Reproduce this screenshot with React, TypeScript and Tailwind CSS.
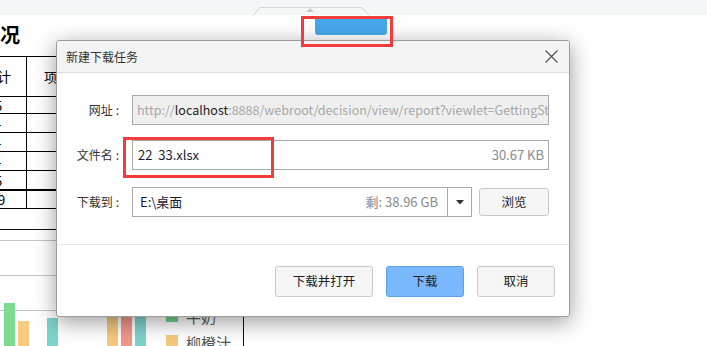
const cjk = { fontFamily: '"Noto Sans CJK SC", "Noto Sans", sans-serif' };

function TableRow({ v, h, shift, thick }: { v: string; h: string; shift: string; thick?: boolean }) {
  return (
    <div className={`flex ${h} ${thick ? "border-b-2" : "border-b"} border-black`}>
      <div className="w-[27px] border-r border-black overflow-hidden flex items-center text-[13px] leading-none">
        <span className={`inline-block ${shift}`}>{v}</span>
      </div>
      <div className="w-[60px]" />
    </div>
  );
}

function Chart() {
  return (
    <svg width="260" height="137" className="block">
      <line x1="0" y1="20.5" x2="56" y2="20.5" stroke="#111" />
      <line x1="0" y1="31.5" x2="250" y2="31.5" stroke="#c4c4c4" />
      <line x1="0" y1="66.5" x2="250" y2="66.5" stroke="#c4c4c4" />
      <line x1="0" y1="101.5" x2="250" y2="101.5" stroke="#c4c4c4" />
      <rect x="4" y="94" width="11" height="43" fill="#7ddb8f" />
      <rect x="18" y="112" width="11" height="25" fill="#f7cb80" />
      <rect x="47" y="109" width="11" height="28" fill="#7dd4cc" />
      <rect x="107" y="95" width="11" height="42" fill="#f5c97e" />
      <rect x="121" y="95" width="11" height="42" fill="#f4968a" />
      <rect x="135" y="95" width="11" height="42" fill="#7dd3cb" />
      <rect x="166" y="101" width="12" height="12" fill="#6fcf86" />
      <rect x="166" y="126" width="12" height="12" fill="#f7c97e" />
      <text x="186" y="114" fontSize="15" fill="#555" style={cjk}>牛奶</text>
      <text x="186" y="140" fontSize="15" fill="#555" style={cjk}>柳橙汁</text>
      <line x1="243.5" y1="100" x2="243.5" y2="137" stroke="#111" />
    </svg>
  );
}

function Btn({ w, primary, children }: { w: string; primary?: boolean; children: string }) {
  return (
    <button
      className={`${w} h-[31px] rounded-[3px] border text-[12.5px] text-[#222] flex items-center justify-center ${
        primary ? "bg-[#7ab8ff] border-[#5b9ff0]" : "bg-[#f6f6f6] border-[#c9c9c9]"
      }`}
      style={cjk}
    >
      {children}
    </button>
  );
}

function Label({ children }: { children: string }) {
  return (
    <div className="w-[62px] text-right text-[12px] text-[#333]" style={cjk}>
      {children}
      <span className="ml-[3px]">:</span>
    </div>
  );
}

export default function App() {
  return (
    <div className="relative w-[707px] h-[346px] overflow-hidden bg-white" style={cjk}>
      {/* top strip */}
      <div className="relative h-[15px] bg-[#f5f6f8]">
        <svg className="absolute left-[252px] top-[6px]" width="118" height="10">
          <path d="M1 9.5 L8 1.5 H110 L117 9.5" fill="none" stroke="#d4d4d4" />
          <path d="M54 6 L58 2 L62 6 Z" fill="#c6c6c6" />
        </svg>
      </div>

      {/* heading row */}
      <div className="flex items-start h-[30px]">
        <div className="mt-[9px] text-[20px] leading-[22px] font-bold text-black">况</div>
        <div className="ml-[295px] mt-[3px] w-[72px] h-[17px] rounded-b-[3px] bg-[#47a8ea]" />
      </div>

      {/* table */}
      <div className="mt-[11px] border-t border-black w-[88px]">
        <div className="flex h-[40px] border-b border-black">
          <div className="w-[27px] border-r border-black overflow-hidden flex items-center text-[14px]">
            <span className="inline-block -ml-[3px]">计</span>
          </div>
          <div className="w-[60px] flex items-center pl-[17px] text-[13px]">项目</div>
        </div>
        <TableRow v="5" h="h-[17px]" shift="-ml-[5px]" />
        <TableRow v="4" h="h-[19px]" shift="-ml-[6px]" />
        <TableRow v="4" h="h-[19px]" shift="-ml-[6px]" />
        <TableRow v="4" h="h-[19px]" shift="-ml-[6px]" />
        <TableRow v="5" h="h-[20px]" shift="-ml-[5px]" thick />
        <TableRow v="9" h="h-[18px]" shift="-ml-[2px]" />
      </div>
      <Chart />

      {/* dialog */}
      <div className="absolute left-[56px] top-[40px] w-[514px] h-[277px] border border-[#9c9c9c] rounded-[3px] bg-white shadow-[0_5px_22px_rgba(0,0,0,0.4)] flex flex-col overflow-hidden">
        <div className="h-[32px] shrink-0 flex items-center justify-between pl-[9px] pr-[11px] bg-[#f4f4f4] border-b border-[#dcdcdc] text-[12px] text-[#333]">
          <span>新建下载任务</span>
          <svg width="13" height="13" viewBox="0 0 13 13">
            <path d="M0.5 0.5 L12.5 12.5 M12.5 0.5 L0.5 12.5" stroke="#555" strokeWidth="1.2" fill="none" />
          </svg>
        </div>

        <div className="flex flex-col pt-[22px] pr-[20px]">
          <div className="flex items-center gap-[13px]">
            <Label>网址</Label>
            <div className="flex-1 h-[30px] border border-[#ababab] bg-[#efefef] flex items-center pl-[4px] overflow-hidden whitespace-nowrap text-[12.5px] text-[#a8a8a8]">
              http://<span className="text-[#1e1e1e]">localhost</span>:8888/webroot/decision/view/report?viewlet=GettingStarted.cpt
            </div>
          </div>
          <div className="flex items-center gap-[13px] mt-[15px]">
            <Label>文件名</Label>
            <div className="flex-1 h-[30px] border border-[#ababab] flex items-center justify-between pl-[5px] pr-[4px] text-[13px]">
              <span className="whitespace-pre text-[#1b1b33]">22  33.xlsx</span>
              <span className="text-[#8a8a8a]">30.67 KB</span>
            </div>
          </div>
          <div className="flex items-center gap-[13px] mt-[17px]">
            <Label>下载到</Label>
            <div className="flex-1 flex items-center">
              <div className="w-[340px] h-[30px] border border-[#ababab] flex items-center">
                <div className="flex-1 flex items-center justify-between pl-[7px] pr-[9px] text-[13px]">
                  <span className="text-[#1b1b33]">E:\桌面</span>
                  <span className="text-[#8a8a8a]">剩: 38.96 GB</span>
                </div>
                <div className="w-[24px] h-full border-l border-[#ababab] flex items-center justify-center">
                  <svg width="8" height="5" viewBox="0 0 8 5">
                    <path d="M0 0 H8 L4 4.5 Z" fill="#333" />
                  </svg>
                </div>
              </div>
              <div className="ml-[7px] w-[70px] h-[28px] rounded-[3px] border border-[#c9c9c9] bg-[#f6f6f6] flex items-center justify-center text-[12.5px] text-[#222]">
                浏览
              </div>
            </div>
          </div>
        </div>

        <div className="mt-[27px] border-t border-[#e6e6e6]" />

        <div className="flex justify-end gap-[13px] pr-[14px] mt-[21px]">
          <Btn w="w-[98px]">下载并打开</Btn>
          <Btn w="w-[78px]" primary>下载</Btn>
          <Btn w="w-[78px]">取消</Btn>
        </div>
      </div>

      {/* annotation boxes */}
      <div className="absolute left-[301px] top-[16px] w-[92px] h-[31px] border-[3px] border-[#f23b3b]" />
      <div className="absolute left-[123px] top-[137px] w-[151px] h-[41px] border-[3px] border-[#f23b3b]" />
    </div>
  );
}
